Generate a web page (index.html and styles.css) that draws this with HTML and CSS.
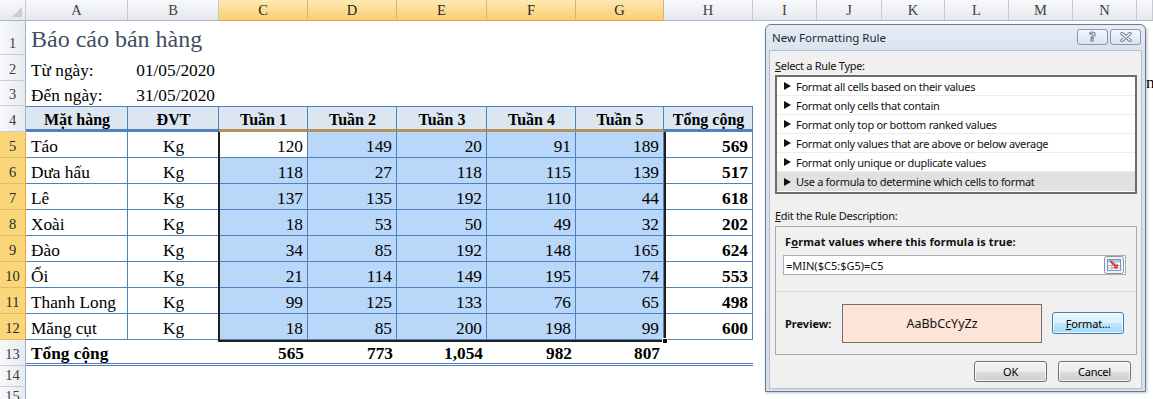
FILE: index.html
```html
<!DOCTYPE html>
<html lang="vi">
<head>
<meta charset="utf-8">
<title>Báo cáo bán hàng</title>
<link rel="stylesheet" href="styles.css">
</head>
<body>
<div class="sheet">
  <div class="colhdr">
    <div class="ch corner"><svg width="10" height="10" viewBox="0 0 10 10"><path d="M10 0 L10 10 L0 10 Z" fill="#c9ccd1"/></svg></div>
    <div class="ch">A</div><div class="ch">B</div>
    <div class="ch sel">C</div><div class="ch sel">D</div><div class="ch sel">E</div><div class="ch sel">F</div><div class="ch sel">G</div>
    <div class="ch">H</div><div class="ch">I</div><div class="ch">J</div><div class="ch">K</div><div class="ch">L</div><div class="ch">M</div><div class="ch">N</div><div class="ch"></div>
  </div>

  <div class="row r1">
    <div class="rh">1</div>
    <div class="c title">Báo cáo bán hàng</div>
  </div>
  <div class="row r2">
    <div class="rh">2</div>
    <div class="c">Từ ngày:</div>
    <div class="c n">01/05/2020</div>
  </div>
  <div class="row r3">
    <div class="rh">3</div>
    <div class="c">Đến ngày:</div>
    <div class="c n">31/05/2020</div>
  </div>
  <div class="row r4">
    <div class="rh">4</div>
    <div class="c th">Mặt hàng</div>
    <div class="c th">ĐVT</div>
    <div class="c th wk">Tuần 1</div>
    <div class="c th wk">Tuần 2</div>
    <div class="c th wk">Tuần 3</div>
    <div class="c th wk">Tuần 4</div>
    <div class="c th wk">Tuần 5</div>
    <div class="c th">Tổng cộng</div>
  </div>

  <div class="row rd">
    <div class="rh sel">5</div>
    <div class="c td">Táo</div><div class="c td m">Kg</div>
    <div class="c td n">120</div><div class="c td n hl">149</div><div class="c td n hl">20</div><div class="c td n hl">91</div><div class="c td n hl">189</div>
    <div class="c td n b">569</div>
  </div>
  <div class="row rd">
    <div class="rh sel">6</div>
    <div class="c td">Dưa hấu</div><div class="c td m">Kg</div>
    <div class="c td n hl">118</div><div class="c td n hl">27</div><div class="c td n hl">118</div><div class="c td n hl">115</div><div class="c td n hl">139</div>
    <div class="c td n b">517</div>
  </div>
  <div class="row rd">
    <div class="rh sel">7</div>
    <div class="c td">Lê</div><div class="c td m">Kg</div>
    <div class="c td n hl">137</div><div class="c td n hl">135</div><div class="c td n hl">192</div><div class="c td n hl">110</div><div class="c td n hl">44</div>
    <div class="c td n b">618</div>
  </div>
  <div class="row rd">
    <div class="rh sel">8</div>
    <div class="c td">Xoài</div><div class="c td m">Kg</div>
    <div class="c td n hl">18</div><div class="c td n hl">53</div><div class="c td n hl">50</div><div class="c td n hl">49</div><div class="c td n hl">32</div>
    <div class="c td n b">202</div>
  </div>
  <div class="row rd">
    <div class="rh sel">9</div>
    <div class="c td">Đào</div><div class="c td m">Kg</div>
    <div class="c td n hl">34</div><div class="c td n hl">85</div><div class="c td n hl">192</div><div class="c td n hl">148</div><div class="c td n hl">165</div>
    <div class="c td n b">624</div>
  </div>
  <div class="row rd">
    <div class="rh sel">10</div>
    <div class="c td">Ổi</div><div class="c td m">Kg</div>
    <div class="c td n hl">21</div><div class="c td n hl">114</div><div class="c td n hl">149</div><div class="c td n hl">195</div><div class="c td n hl">74</div>
    <div class="c td n b">553</div>
  </div>
  <div class="row rd">
    <div class="rh sel">11</div>
    <div class="c td">Thanh Long</div><div class="c td m">Kg</div>
    <div class="c td n hl">99</div><div class="c td n hl">125</div><div class="c td n hl">133</div><div class="c td n hl">76</div><div class="c td n hl">65</div>
    <div class="c td n b">498</div>
  </div>
  <div class="row rd">
    <div class="rh sel">12</div>
    <div class="c td">Măng cụt</div><div class="c td m">Kg</div>
    <div class="c td n hl">18</div><div class="c td n hl">85</div><div class="c td n hl">200</div><div class="c td n hl">198</div><div class="c td n hl">99</div>
    <div class="c td n b">600</div>
  </div>
  <div class="row rt">
    <div class="rh">13</div>
    <div class="c tt">Tổng cộng</div><div class="c tt"></div>
    <div class="c tt n">565</div><div class="c tt n">773</div><div class="c tt n">1,054</div><div class="c tt n">982</div><div class="c tt n">807</div>
    <div class="c tt"></div>
  </div>
  <div class="row r14"><div class="rh">14</div></div>
  <div class="row r15"><div class="rh">15</div></div>

  <div class="selbox"><span class="handle"></span></div>
  <span class="peek">n</span>
</div>

<div class="dlg">
  <div class="dlg-title">
    <span class="caption">New Formatting Rule</span>
    <div class="cap-btns">
      <span class="cap-btn"><span class="q">?</span></span>
      <span class="cap-btn"><svg width="14" height="10" viewBox="0 0 14 10"><path d="M3 1.5 L11 8.5 M11 1.5 L3 8.5" stroke="#6f8096" stroke-width="3.4" stroke-linecap="round"/><path d="M3 1.5 L11 8.5 M11 1.5 L3 8.5" stroke="#ffffff" stroke-width="1.3" stroke-linecap="round"/></svg></span>
    </div>
  </div>
  <div class="dlg-body">
    <div class="lbl"><u>S</u>elect a Rule Type:</div>
    <ul class="rules">
      <li>Format all cells based on their values</li>
      <li>Format only cells that contain</li>
      <li>Format only top or bottom ranked values</li>
      <li>Format only values that are above or below average</li>
      <li>Format only unique or duplicate values</li>
      <li class="cur">Use a formula to determine which cells to format</li>
    </ul>
    <div class="lbl lbl2"><u>E</u>dit the Rule Description:</div>
    <div class="desc">
      <div class="desc-top">
        <div class="desc-h">F<u>o</u>rmat values where this formula is true:</div>
        <div class="formula">
          <span class="ftext">=MIN($C5:$G5)=C5</span>
          <svg class="rsel" width="20" height="18" viewBox="0 0 20 18">
            <rect x="0.5" y="0.5" width="19" height="17" rx="2" fill="#eef1f5" stroke="#8d96a1"/>
            <rect x="3.5" y="3.5" width="13" height="11" fill="#ffffff" stroke="#7d97b8"/>
            <rect x="4" y="4" width="12" height="2.5" fill="#a9c4e6"/>
            <path d="M4 9.5 H16 M4 12 H16 M8 6.5 V14.5 M12 6.5 V14.5" stroke="#9fb6d6" stroke-width="1"/>
            <path d="M7 5.5 L12 10.5" stroke="#e23b22" stroke-width="2.2" stroke-linecap="round"/>
            <path d="M13.8 7.6 L13.8 12.3 L9.1 12.3 Z" fill="#e23b22"/>
          </svg>
        </div>
      </div>
      <div class="desc-bot">
        <span class="pv-lbl">Preview:</span>
        <div class="pv"><span>AaBbCcYyZz</span></div>
        <button class="btn fmt"><u>F</u>ormat...</button>
      </div>
    </div>
    <div class="actions">
      <button class="btn">OK</button>
      <button class="btn">Cancel</button>
    </div>
  </div>
</div>
</body>
</html>
```

FILE: styles.css
```css
* { box-sizing: border-box; margin: 0; padding: 0; }

html, body {
  width: 1153px;
  height: 399px;
  overflow: hidden;
  background: #ffffff;
}

body {
  position: relative;
  font-family: "Liberation Serif", "Times New Roman", serif;
  color: #000;
}

.sheet {
  position: relative;
  width: 1153px;
}

/* column header */
.colhdr {
  display: grid;
  grid-template-columns: 26px 102px 91px 89px 89px 90px 89px 88px 89px 64px 65px 63px 64px 64px 64px 1fr;
  height: 21px;
}

.ch {
  display: flex;
  align-items: center;
  justify-content: center;
  background: linear-gradient(#f8f9fb, #e5e8ed);
  border-right: 1px solid #c5cad2;
  border-bottom: 1px solid #a9b8c9;
  font-size: 14.5px;
  color: #404040;
  padding-top: 1px;
}

.ch.sel {
  background: linear-gradient(#fde9b3, #f8cf72);
  border-right-color: #e1b45e;
  border-bottom-color: #f0a23c;
  color: #262626;
}

.ch.corner {
  align-items: flex-end;
  justify-content: flex-end;
  padding: 0 3px 3px 0;
}

/* rows */
.row {
  display: grid;
  grid-template-columns: 26px 102px 91px 89px 89px 90px 89px 88px 89px 1fr;
}

.r1 { height: 34px; }
.r2 { height: 26px; }
.r3 { height: 25px; }
.r4 { height: 26px; }
.rd { height: 26px; }
.rt { height: 26px; }
.r14 { height: 21px; }
.r15 { height: 21px; }

.rh {
  display: flex;
  align-items: flex-end;
  justify-content: center;
  background: linear-gradient(90deg, #f7f8fa, #e8ebef);
  border-right: 1px solid #9fb3c8;
  border-bottom: 1px solid #c9ced5;
  font-size: 14.5px;
  line-height: 18px;
  padding-bottom: 2px;
  color: #404040;
}

.rh.sel {
  background: #f9d67a;
  border-bottom-color: #e6bb62;
  border-right-color: #efa03c;
  color: #2a2a2a;
}

.c {
  display: flex;
  align-items: flex-end;
  font-size: 17.3px;
  line-height: 19px;
  padding: 0 4px 1px 5px;
  white-space: nowrap;
  overflow: visible;
}

.c.n { justify-content: flex-end; }
.c.m { justify-content: center; }
.c.b { font-weight: bold; }

.title {
  font-size: 24px;
  line-height: 28px;
  color: #3f4e62;
  padding-bottom: 2px;
}

/* table header */
.th {
  justify-content: center;
  background: #dce6f1;
  border-top: 1px solid #4f81bd;
  border-right: 1px solid #4f81bd;
  border-bottom: 3px solid #4f81bd;
  font-weight: bold;
  font-size: 16px;
  line-height: 16px;
  padding-bottom: 1px;
}

.th.wk { border-bottom-color: #b3915c; }

.td {
  border-right: 1px solid #4f81bd;
  border-bottom: 1px solid #4f81bd;
}

.hl { background: #b9d7f8; }

.tt {
  font-weight: bold;
  border-bottom: 3px double #4f81bd;
  line-height: 18px;
  padding-bottom: 0;
}

/* selection overlay */
.selbox {
  position: absolute;
  left: 218px;
  top: 132px;
  width: 448px;
  height: 210px;
  border: 2px solid #221e18;
  border-top: 0;
  pointer-events: none;
}

.handle {
  position: absolute;
  right: -4px;
  bottom: -4px;
  width: 6px;
  height: 6px;
  background: #111;
  border: 1px solid #fff;
}

.peek {
  position: absolute;
  left: 1146px;
  top: 73px;
  font-size: 17.3px;
}

/* dialog */
.dlg {
  position: absolute;
  left: 765px;
  top: 24px;
  width: 381px;
  height: 368px;
  border: 1px solid #6c7b8d;
  border-radius: 6px 6px 0 0;
  background: linear-gradient(#e5edf6, #d7e2ee 30px, #d5e0ec);
  display: flex;
  flex-direction: column;
  font-family: "Noto Sans", "Open Sans", sans-serif;
  color: #000;
  box-shadow: 1px 1px 3px rgba(0, 0, 0, 0.25);
}

.dlg-title {
  height: 25px;
  display: flex;
  align-items: center;
  justify-content: space-between;
  padding: 0 4px 0 6px;
}

.caption {
  font-size: 11.5px;
  color: #1f2a36;
}

.cap-btns {
  display: flex;
  gap: 2px;
  align-self: flex-start;
  margin-top: 4px;
}

.cap-btn {
  width: 31px;
  height: 16px;
  border: 1px solid #8798ad;
  border-radius: 3px;
  background: linear-gradient(#f4f7fb, #dbe4ef);
  display: flex;
  align-items: center;
  justify-content: center;
}

.q {
  font-family: "DejaVu Sans", sans-serif;
  font-weight: bold;
  font-size: 12px;
  line-height: 12px;
  color: #ffffff;
  -webkit-text-stroke: 1px #6f8096;
}

.dlg-body {
  flex: 1;
  margin: 0 3px 2px 3px;
  background: #f0f0f0;
  border: 1px solid #b3c0cf;
  padding: 7px 4px 0 5px;
  display: flex;
  flex-direction: column;
  font-size: 11px;
  letter-spacing: -0.3px;
  color: #111;
}

.lbl {
  height: 16px;
  line-height: 16px;
  margin-bottom: 1px;
}

.lbl2 {
  margin-top: 14px;
  margin-bottom: 2px;
}

.rules {
  list-style: none;
  border: 2px solid #6d6d6d;
  background: #fff;
  height: 119px;
  padding: 0;
}

.rules li {
  height: 19px;
  display: flex;
  align-items: center;
  padding-left: 7px;
  border-bottom: 1px solid #ececec;
}

.rules li::before {
  content: "";
  width: 0;
  height: 0;
  border-left: 7px solid #111;
  border-top: 4px solid transparent;
  border-bottom: 4px solid transparent;
  margin-right: 5px;
}

.rules li.cur {
  background: #e1e1e1;
  border-bottom: 0;
}

.desc {
  border: 1px solid #a9a9a9;
  height: 129px;
  display: flex;
  flex-direction: column;
}

.desc-top {
  padding: 7px 10px 16px 7px;
  border-bottom: 1px solid #d7d7d7;
}

.desc-h {
  font-weight: bold;
  height: 16px;
  line-height: 16px;
  padding-left: 2px;
  margin-bottom: 5px;
  letter-spacing: 0.1px;
}

.formula {
  height: 20px;
  border: 1px solid #abadb3;
  background: #fff;
  display: flex;
  align-items: center;
  justify-content: space-between;
  padding: 0 1px 0 2px;
  letter-spacing: 0;
}

.rsel { display: block; }

.desc-bot {
  flex: 1;
  display: flex;
  align-items: center;
  padding: 0 0 0 9px;
}

.pv-lbl {
  font-weight: bold;
  width: 57px;
  letter-spacing: 0;
}

.pv {
  width: 200px;
  height: 39px;
  border: 1px solid #6f6f6f;
  background: #fce4d6;
  display: flex;
  align-items: center;
  justify-content: center;
  font-size: 12.5px;
  letter-spacing: 0;
}

.btn {
  font-family: "Noto Sans", "Open Sans", sans-serif;
  font-size: 11px;
  letter-spacing: -0.2px;
  color: #000;
  width: 73px;
  height: 21px;
  border: 1px solid #707070;
  border-radius: 3px;
  background: linear-gradient(#f2f2f2 0%, #ebebeb 50%, #dddddd 51%, #cfcfcf 100%);
  box-shadow: inset 0 0 0 1px rgba(255, 255, 255, 0.7);
}

.btn.fmt {
  width: 72px;
  height: 22px;
  margin-left: 10px;
  border-color: #3c7fb1;
  background: linear-gradient(#eaf6fd 0%, #d9f0fc 50%, #bee6fd 51%, #a7d9f5 100%);
}

.actions {
  display: flex;
  justify-content: flex-end;
  gap: 11px;
  padding-right: 6px;
  margin-top: 6px;
}
```
